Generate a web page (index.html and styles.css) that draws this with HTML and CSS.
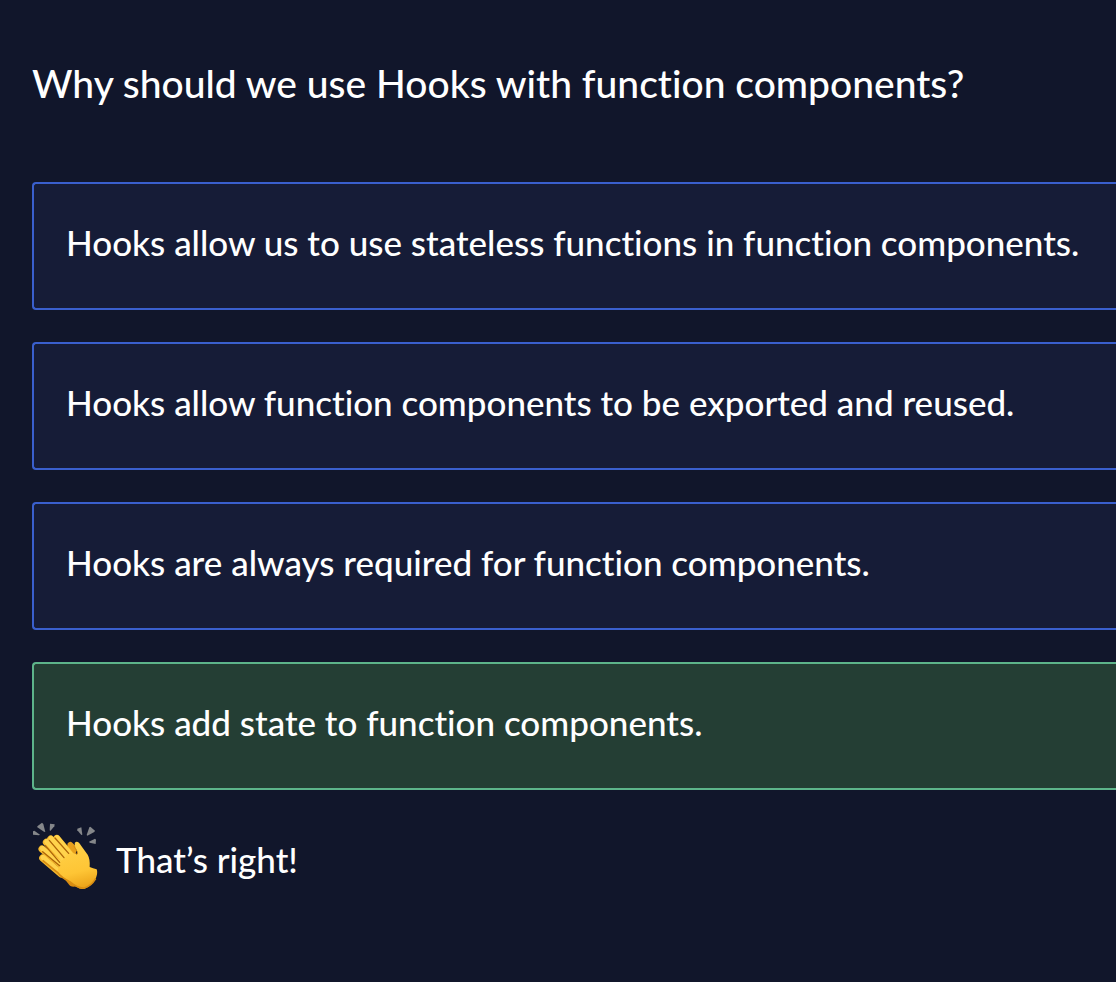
FILE: index.html
```html
<!DOCTYPE html>
<html lang="en">
<head>
<meta charset="utf-8">
<meta name="viewport" content="width=device-width, initial-scale=1">
<title>Quiz: Hooks</title>
<link rel="stylesheet" href="styles.css">
</head>
<body>
<main class="quiz">
  <h1 class="question">Why should we use Hooks with function components?</h1>
  <div class="answers">
    <button type="button" class="answer">Hooks allow us to use stateless functions in function components.</button>
    <button type="button" class="answer">Hooks allow function components to be exported and reused.</button>
    <button type="button" class="answer">Hooks are always required for function components.</button>
    <button type="button" class="answer answer-correct">Hooks add state to function components.</button>
  </div>
  <div class="feedback" role="status">
    <svg class="clap" viewBox="36 36 204 204" aria-hidden="true">
      <defs>
        <linearGradient id="skin" gradientUnits="userSpaceOnUse" x1="160" y1="100" x2="195" y2="240">
          <stop offset="0" stop-color="#ffd148"/>
          <stop offset="0.6" stop-color="#fec535"/>
          <stop offset="1" stop-color="#e89d14"/>
        </linearGradient>
      </defs>
      <g fill="#85878a">
        <path d="M39 64L43 62L60 74L57 76L39 74Z"/>
        <path d="M52 49L66 38L70 42L76 66L72 65L52 52Z"/>
        <path d="M90 41L104 43L103 49L91 63L89 61Z"/>
        <path d="M172 56L184 52L187 74L184 75L172 61Z"/>
        <path d="M211 50L225 62L223 66L202 77L200 75L208 52Z"/>
        <path d="M207 95L225 86L228 89L227 102L209 98Z"/>
      </g>
      <path fill="#e8a01c" d="M143 100Q150 91 157 98L170 112L166 140L140 120Z"/>
      <path fill="#d98b10" d="M120 190L145 221Q151 233 169 229L180 210Z"/>
      <g stroke-linecap="round" stroke-width="21" stroke="#f6b92d">
        <path d="M68 144L124 192"/>
        <path d="M66 117L130 170"/>
        <path d="M79 97L140 160"/>
        <path d="M92 87L150 150"/>
        <path d="M110 85L160 145"/>
      </g>
      <g stroke-linecap="round" stroke-width="15" stroke="#ffd34c">
        <path d="M69 142L124 190"/>
        <path d="M67 115L130 168"/>
        <path d="M80 95L140 158"/>
        <path d="M93 85L150 148"/>
        <path d="M111 83L160 143"/>
      </g>
      <path fill="url(#skin)" d="M146 128L167 131Q174 136 172 126Q159 100 167 96Q175 92 184 108L203 134Q211 148 209 171Q219 175 230 178Q234 188 228 204Q216 228 194 236Q181 240 170 231Q155 220 140 212Q125 203 112 185L120 157L134 144Z"/>
      <g fill="none" stroke="#ad6509" stroke-width="4" stroke-linecap="round" stroke-linejoin="round">
        <path d="M105 84L146 130"/>
        <path d="M88 91L132 143"/>
        <path d="M76 107L119 157"/>
        <path d="M68 125L119 167"/>
      </g>
      <path fill="none" stroke="#d48c15" stroke-width="3" d="M167 130Q174 136 172 126L161 107"/>
      <path fill="none" stroke="#d88d12" stroke-width="5" d="M68 151L112 187Q125 204 149 215Q174 236 193 234Q213 229 227 206"/>
    </svg>
    <p class="message">That’s right!</p>
  </div>
</main>
</body>
</html>
```
FILE: styles.css
```css
* {
  box-sizing: border-box;
}

body {
  margin: 0;
  background: #11162b;
  color: #fff;
  font-family: Lato, "Liberation Sans", sans-serif;
  font-weight: 500;
  font-variant-ligatures: none;
}

.quiz {
  padding: 55px 0 32px 32px;
}

.question {
  margin: 0 0 71px;
  font-size: 39px;
  font-weight: 500;
  line-height: 56px;
}

.answers {
  display: grid;
  gap: 32px;
}

.answer {
  padding: 30px 32px 38px;
  border: 2px solid #3a5fcd;
  border-right: 0;
  border-radius: 4px 0 0 4px;
  background: #161c37;
  color: inherit;
  font: inherit;
  font-variant-ligatures: none;
  font-size: 35px;
  line-height: 56px;
  text-align: left;
  cursor: pointer;
}

.answer-correct {
  border-color: #5db48a;
  background: #243e34;
}

.feedback {
  display: flex;
  align-items: center;
  gap: 16px;
  margin-top: 32px;
}

.clap {
  width: 68px;
  height: 68px;
}

.message {
  margin: 0;
  padding-top: 6px;
  font-size: 35px;
  line-height: 56px;
}
```
